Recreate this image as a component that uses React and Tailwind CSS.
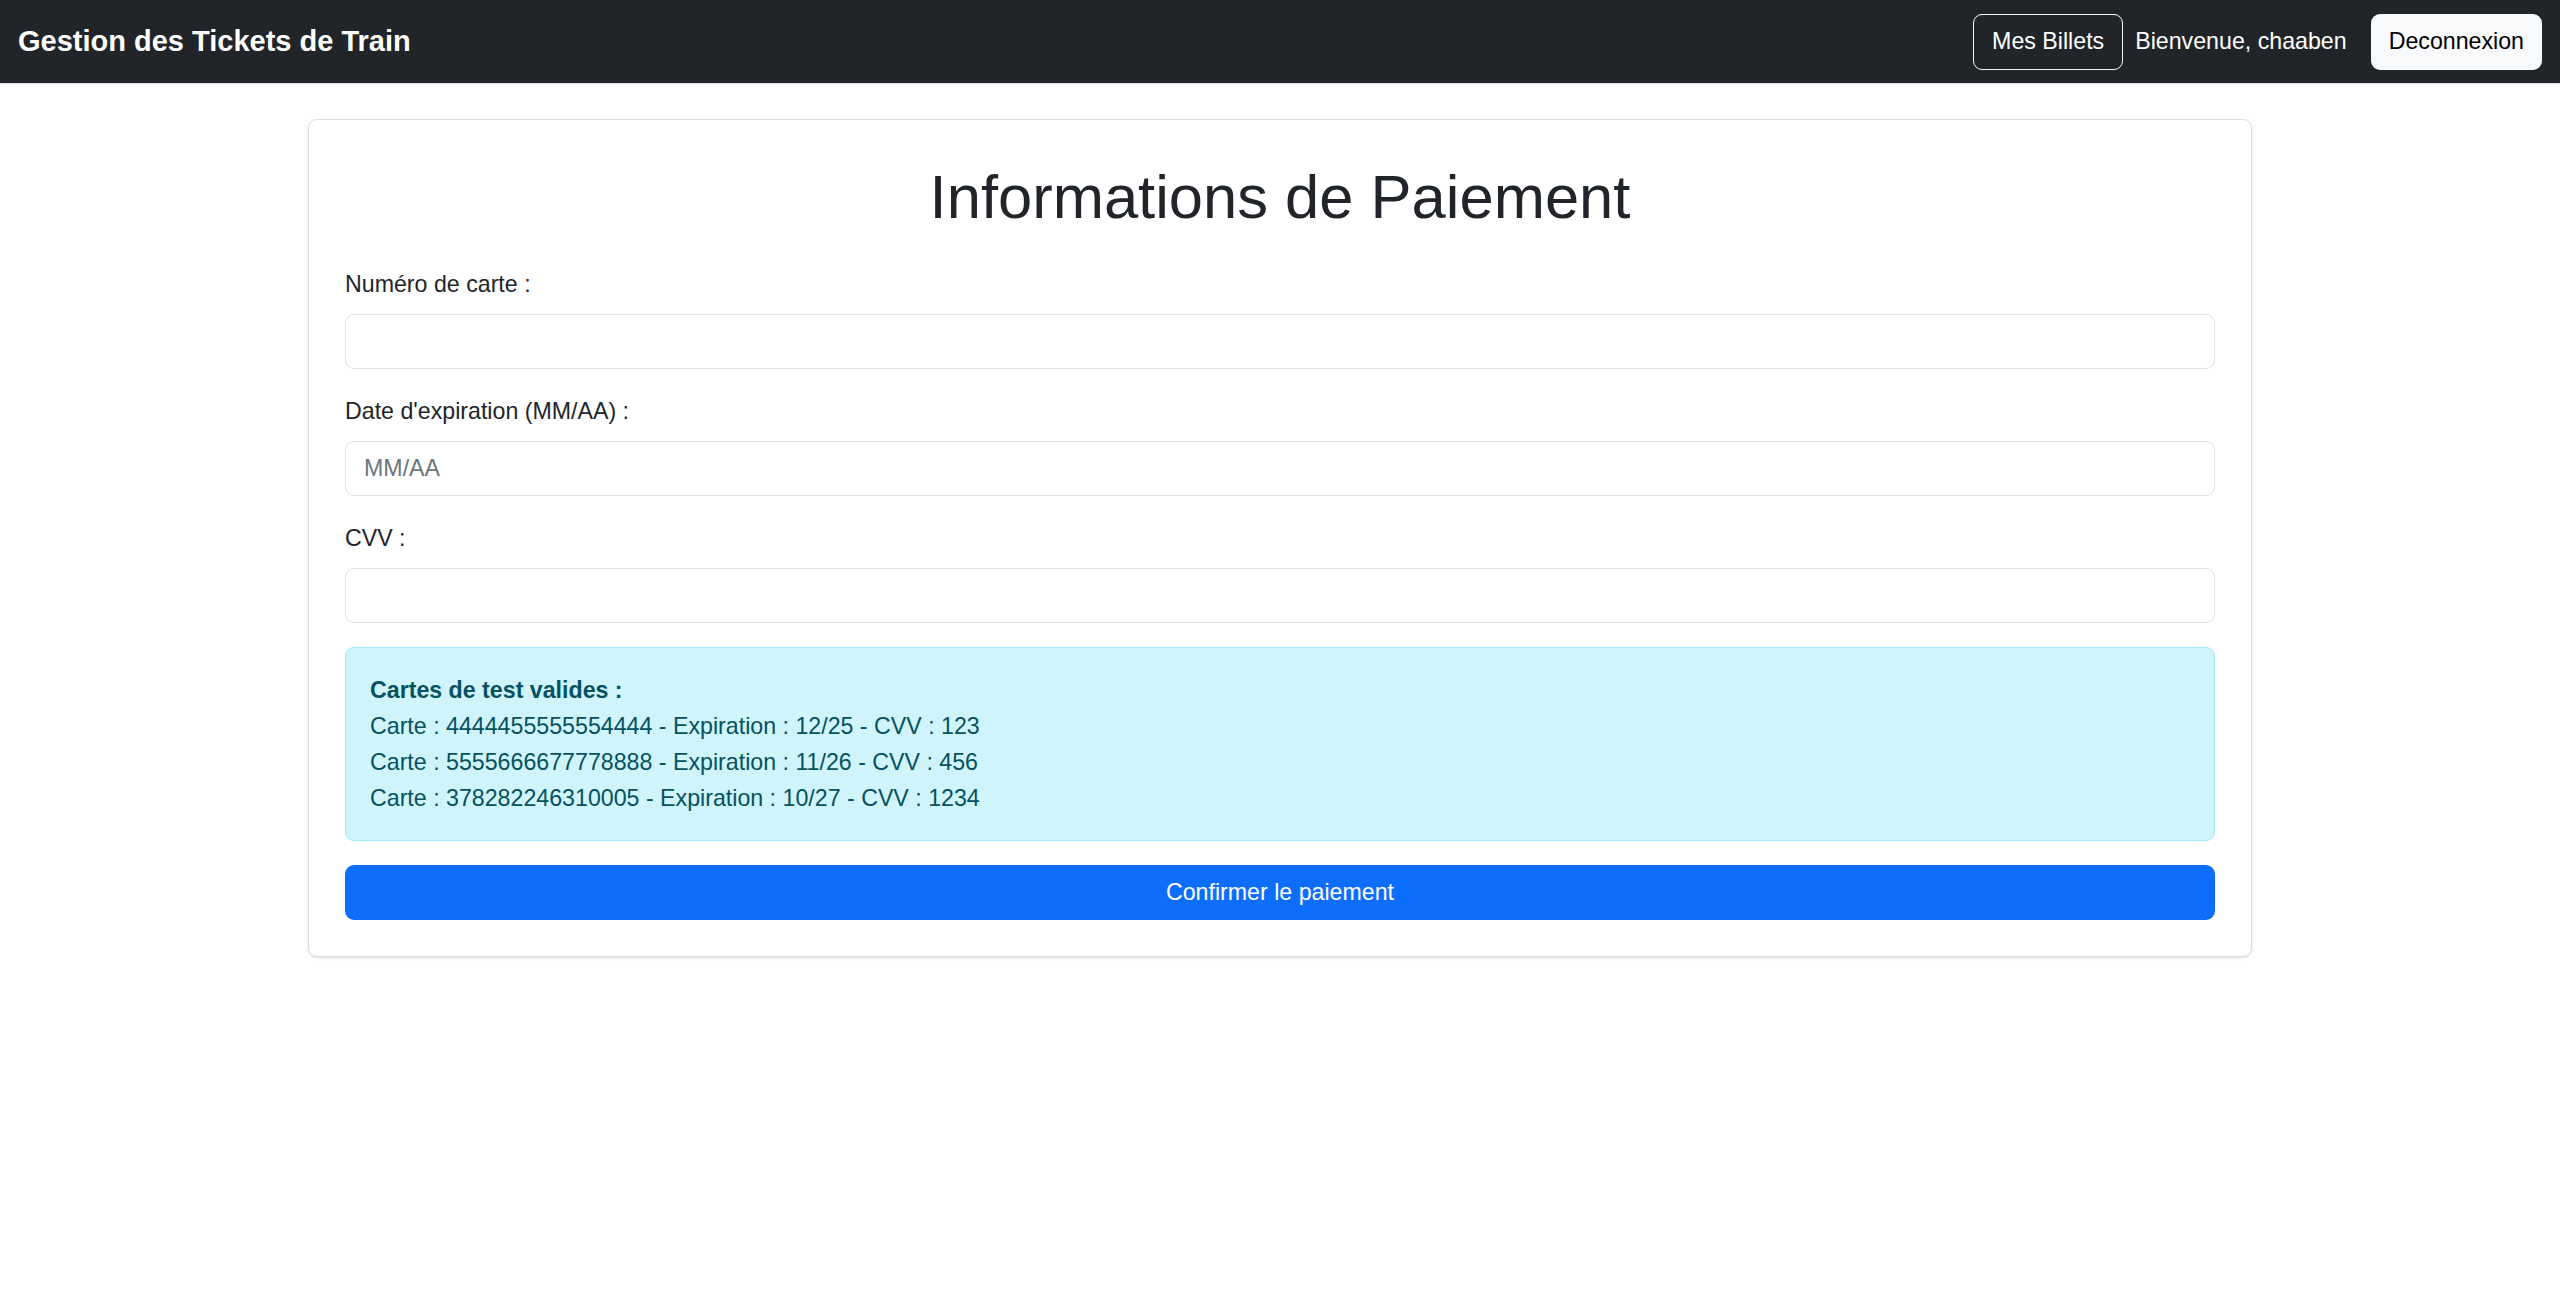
import React from 'react';

const font = { fontFamily: '"Liberation Sans", Arial, sans-serif' };

function Field({ label, placeholder }) {
  return (
    <div className="mb-[24px]">
      <label className="block mb-[12px] text-[23.2px] leading-[36px] text-[#212529]">{label}</label>
      <input
        type="text"
        placeholder={placeholder}
        className="block w-full h-[55px] px-[18px] text-[23.2px] text-[#212529] bg-white border border-[#dee2e6] rounded-[9px] outline-none placeholder:text-[#6c757d]"
      />
    </div>
  );
}

export default function App() {
  const cards = [
    'Carte : 4444455555554444 - Expiration : 12/25 - CVV : 123',
    'Carte : 5555666677778888 - Expiration : 11/26 - CVV : 456',
    'Carte : 378282246310005 - Expiration : 10/27 - CVV : 1234',
  ];

  return (
    <div className="min-h-screen bg-white" style={font}>
      {/* Navbar */}
      <nav className="h-[83px] bg-[#212529] flex items-center justify-between px-[18px] shadow-sm">
        <span className="text-[29px] font-bold text-white">Gestion des Tickets de Train</span>
        <div className="flex items-center">
          <button className="h-[56px] px-[18px] text-[23.2px] text-white border border-[#f8f9fa] rounded-[9px]">
            Mes Billets
          </button>
          <span className="ml-[12px] mr-[24px] text-[23.2px] text-white">Bienvenue, chaaben</span>
          <button className="h-[56px] px-[18px] text-[23.2px] text-black bg-[#f8f9fa] rounded-[9px]">
            Deconnexion
          </button>
        </div>
      </nav>

      {/* Main */}
      <div className="max-w-[1980px] mx-auto px-[18px] mt-[36px]">
        <div className="border border-[#dcdcdc] rounded-[9px] p-[36px] shadow-sm">
          <h1 className="pt-[5px] text-center text-[61.5px] leading-[72px] font-medium text-[#212529] mb-[33px]">
            Informations de Paiement
          </h1>

          <Field label="Numéro de carte :" />
          <Field label="Date d'expiration (MM/AA) :" placeholder="MM/AA" />
          <Field label="CVV :" />

          <div className="mb-[24px] p-[24px] bg-[#cff4fc] border border-[#9eeaf9] rounded-[9px] text-[23.2px] leading-[36px] text-[#055160]">
            <strong className="font-bold">Cartes de test valides :</strong>
            {cards.map((c) => (
              <div key={c}>{c}</div>
            ))}
          </div>

          <button className="w-full h-[55px] bg-[#0d6efd] text-white text-[23.2px] rounded-[9px]">
            Confirmer le paiement
          </button>
        </div>
      </div>
    </div>
  );
}
